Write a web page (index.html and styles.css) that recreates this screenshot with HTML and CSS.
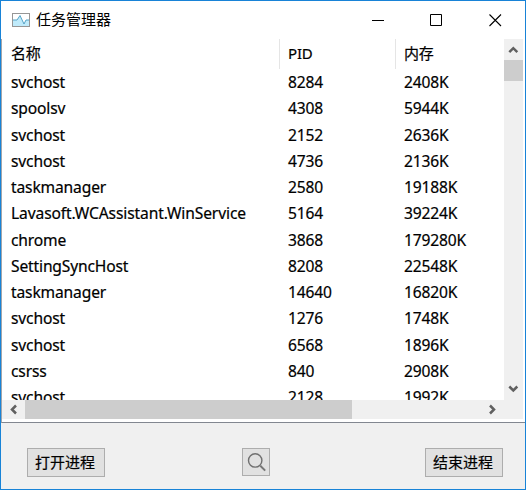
FILE: index.html
```html
<!DOCTYPE html>
<html lang="zh-CN">
<head>
<meta charset="utf-8">
<title>任务管理器</title>
<link rel="stylesheet" href="styles.css">
</head>
<body>
<div class="window">
  <header class="titlebar">
    <svg class="app-icon" width="18" height="14" viewBox="0 0 18 14">
      <path d="M1 7H5L8 2.5L12 11L14 7H17V13H1Z" fill="#c0ebfb"/>
      <path d="M1 7H5L8 2.5L12 11L14 7H17" fill="none" stroke="#55a4c8"/>
      <rect x=".5" y=".5" width="17" height="13" fill="none" stroke="#969696"/>
    </svg>
    <h1 class="title">任务管理器</h1>
    <div class="controls">
      <svg width="13" height="13" viewBox="0 0 13 13"><path d="M0 6.5H12" stroke="#000"/></svg>
      <svg width="13" height="13" viewBox="0 0 13 13"><path d="M.5 .5H11.5V11.5H.5Z" fill="none" stroke="#000"/></svg>
      <svg class="close" width="13" height="13" viewBox="0 0 13 13"><path d="M.5 .5L12 12M12 .5L.5 12" stroke="#000" stroke-width="1.1"/></svg>
    </div>
  </header>
  <main class="list">
    <div class="view">
      <div class="row head"><span>名称</span><span>PID</span><span>内存</span></div>
      <div class="row"><span>svchost</span><span>8284</span><span>2408K</span></div>
      <div class="row"><span>spoolsv</span><span>4308</span><span>5944K</span></div>
      <div class="row"><span>svchost</span><span>2152</span><span>2636K</span></div>
      <div class="row"><span>svchost</span><span>4736</span><span>2136K</span></div>
      <div class="row"><span>taskmanager</span><span>2580</span><span>19188K</span></div>
      <div class="row"><span class="long">Lavasoft.WCAssistant.WinService</span><span>5164</span><span>39224K</span></div>
      <div class="row"><span>chrome</span><span>3868</span><span>179280K</span></div>
      <div class="row"><span>SettingSyncHost</span><span>8208</span><span>22548K</span></div>
      <div class="row"><span>taskmanager</span><span>14640</span><span>16820K</span></div>
      <div class="row"><span>svchost</span><span>1276</span><span>1748K</span></div>
      <div class="row"><span>svchost</span><span>6568</span><span>1896K</span></div>
      <div class="row"><span>csrss</span><span>840</span><span>2908K</span></div>
      <div class="row"><span>svchost</span><span>2128</span><span>1992K</span></div>
    </div>
    <div class="vscroll">
      <svg width="19" height="21" viewBox="0 0 19 21"><path d="M5.3 13.2L9.3 9.2L13.3 13.2" class="arrow"/></svg>
      <div class="vthumb"></div>
      <svg class="down" width="19" height="21" viewBox="0 0 19 21"><path d="M5.3 7.5L9.3 11.5L13.3 7.5" class="arrow"/></svg>
    </div>
    <div class="hscroll">
      <svg width="22" height="19" viewBox="0 0 22 19"><path d="M14 5.5L10 9.5L14 13.5" class="arrow"/></svg>
      <div class="hthumb"></div>
      <svg class="right" width="22" height="19" viewBox="0 0 22 19"><path d="M10 5.5L14 9.5L10 13.5" class="arrow"/></svg>
    </div>
  </main>
  <footer class="footer">
    <button class="btn">打开进程</button>
    <button class="btn search" aria-label="搜索">
      <svg width="26" height="26" viewBox="0 0 26 26"><circle cx="12.2" cy="11.4" r="6.7" fill="none" stroke="#707070" stroke-width="1.4"/><path d="M17.3 16.8L22.2 21.6" stroke="#777" stroke-width="2"/></svg>
    </button>
    <button class="btn end">结束进程</button>
  </footer>
</div>
</body>
</html>
```
FILE: styles.css
```css
* { box-sizing: border-box; }
body {
  margin: 0;
  font-family: "Noto Sans", "Noto Sans CJK SC", sans-serif;
  font-size: 15px;
  color: #000;
}
svg { display: block; flex: none; }
.window {
  width: 526px;
  height: 490px;
  display: flex;
  flex-direction: column;
  border: 1px solid #1883d7;
  background: #f0f0f0;
}
.titlebar {
  height: 38px;
  flex: none;
  display: flex;
  align-items: center;
  padding-left: 11px;
  background: #fff;
}
.app-icon { margin-bottom: 1px; }
.title {
  margin: 0 0 2px 6px;
  font: 15px/20px "Noto Sans CJK SC", sans-serif;
}
.controls {
  margin-left: auto;
  display: flex;
  gap: 45px;
  padding-right: 23px;
}
.close { margin-left: 1px; }
.list {
  height: 384px;
  flex: none;
  display: grid;
  grid-template: 361px 19px / 502px 19px;
  padding-bottom: 2px;
  border-left: 1px solid #a3a6ab;
  border-bottom: 1px solid #828790;
  background: #fff;
}
.view { overflow: hidden; -webkit-text-stroke: 0.2px #000; }
.row {
  display: grid;
  grid-template-columns: 277px 116px 1fr;
  height: 26.25px;
  line-height: 27px;
  font-size: 15.6px;
  white-space: nowrap;
}
.row span {
  padding-left: 9px;
  letter-spacing: -0.15px;
}
.row .long { letter-spacing: -0.11px; }
.head { height: 30px; line-height: 29px; font-size: 15px; }
.head span + span { border-left: 1px solid #e5e5e5; padding-left: 8px; }
.vscroll {
  display: flex;
  flex-direction: column;
  background: #f0f0f0;
}
.vthumb { height: 21px; background: #cdcdcd; }
.down { margin-top: auto; }
.hscroll {
  grid-column: 1 / 3;
  display: flex;
  background: #f0f0f0;
}
.hthumb { width: 327px; margin-left: 1px; background: #cdcdcd; }
.right { margin-left: auto; margin-right: 21px; }
.arrow { fill: none; stroke: #606060; stroke-width: 2.5; }
.footer {
  flex: 1;
  display: flex;
  align-items: flex-start;
  padding: 25px 22px 0 26px;
}
.btn {
  width: 78px;
  height: 29px;
  padding: 0 2px 2px 0;
  border: 1px solid #adadad;
  background: #e1e1e1;
  color: #000;
  font: 15px/25px "Noto Sans CJK SC", sans-serif;
  -webkit-text-stroke: 0.2px #000;
}
.search { width: 28px; height: 28px; padding: 0; margin-left: 137px; }
.end { margin-left: auto; }
```
